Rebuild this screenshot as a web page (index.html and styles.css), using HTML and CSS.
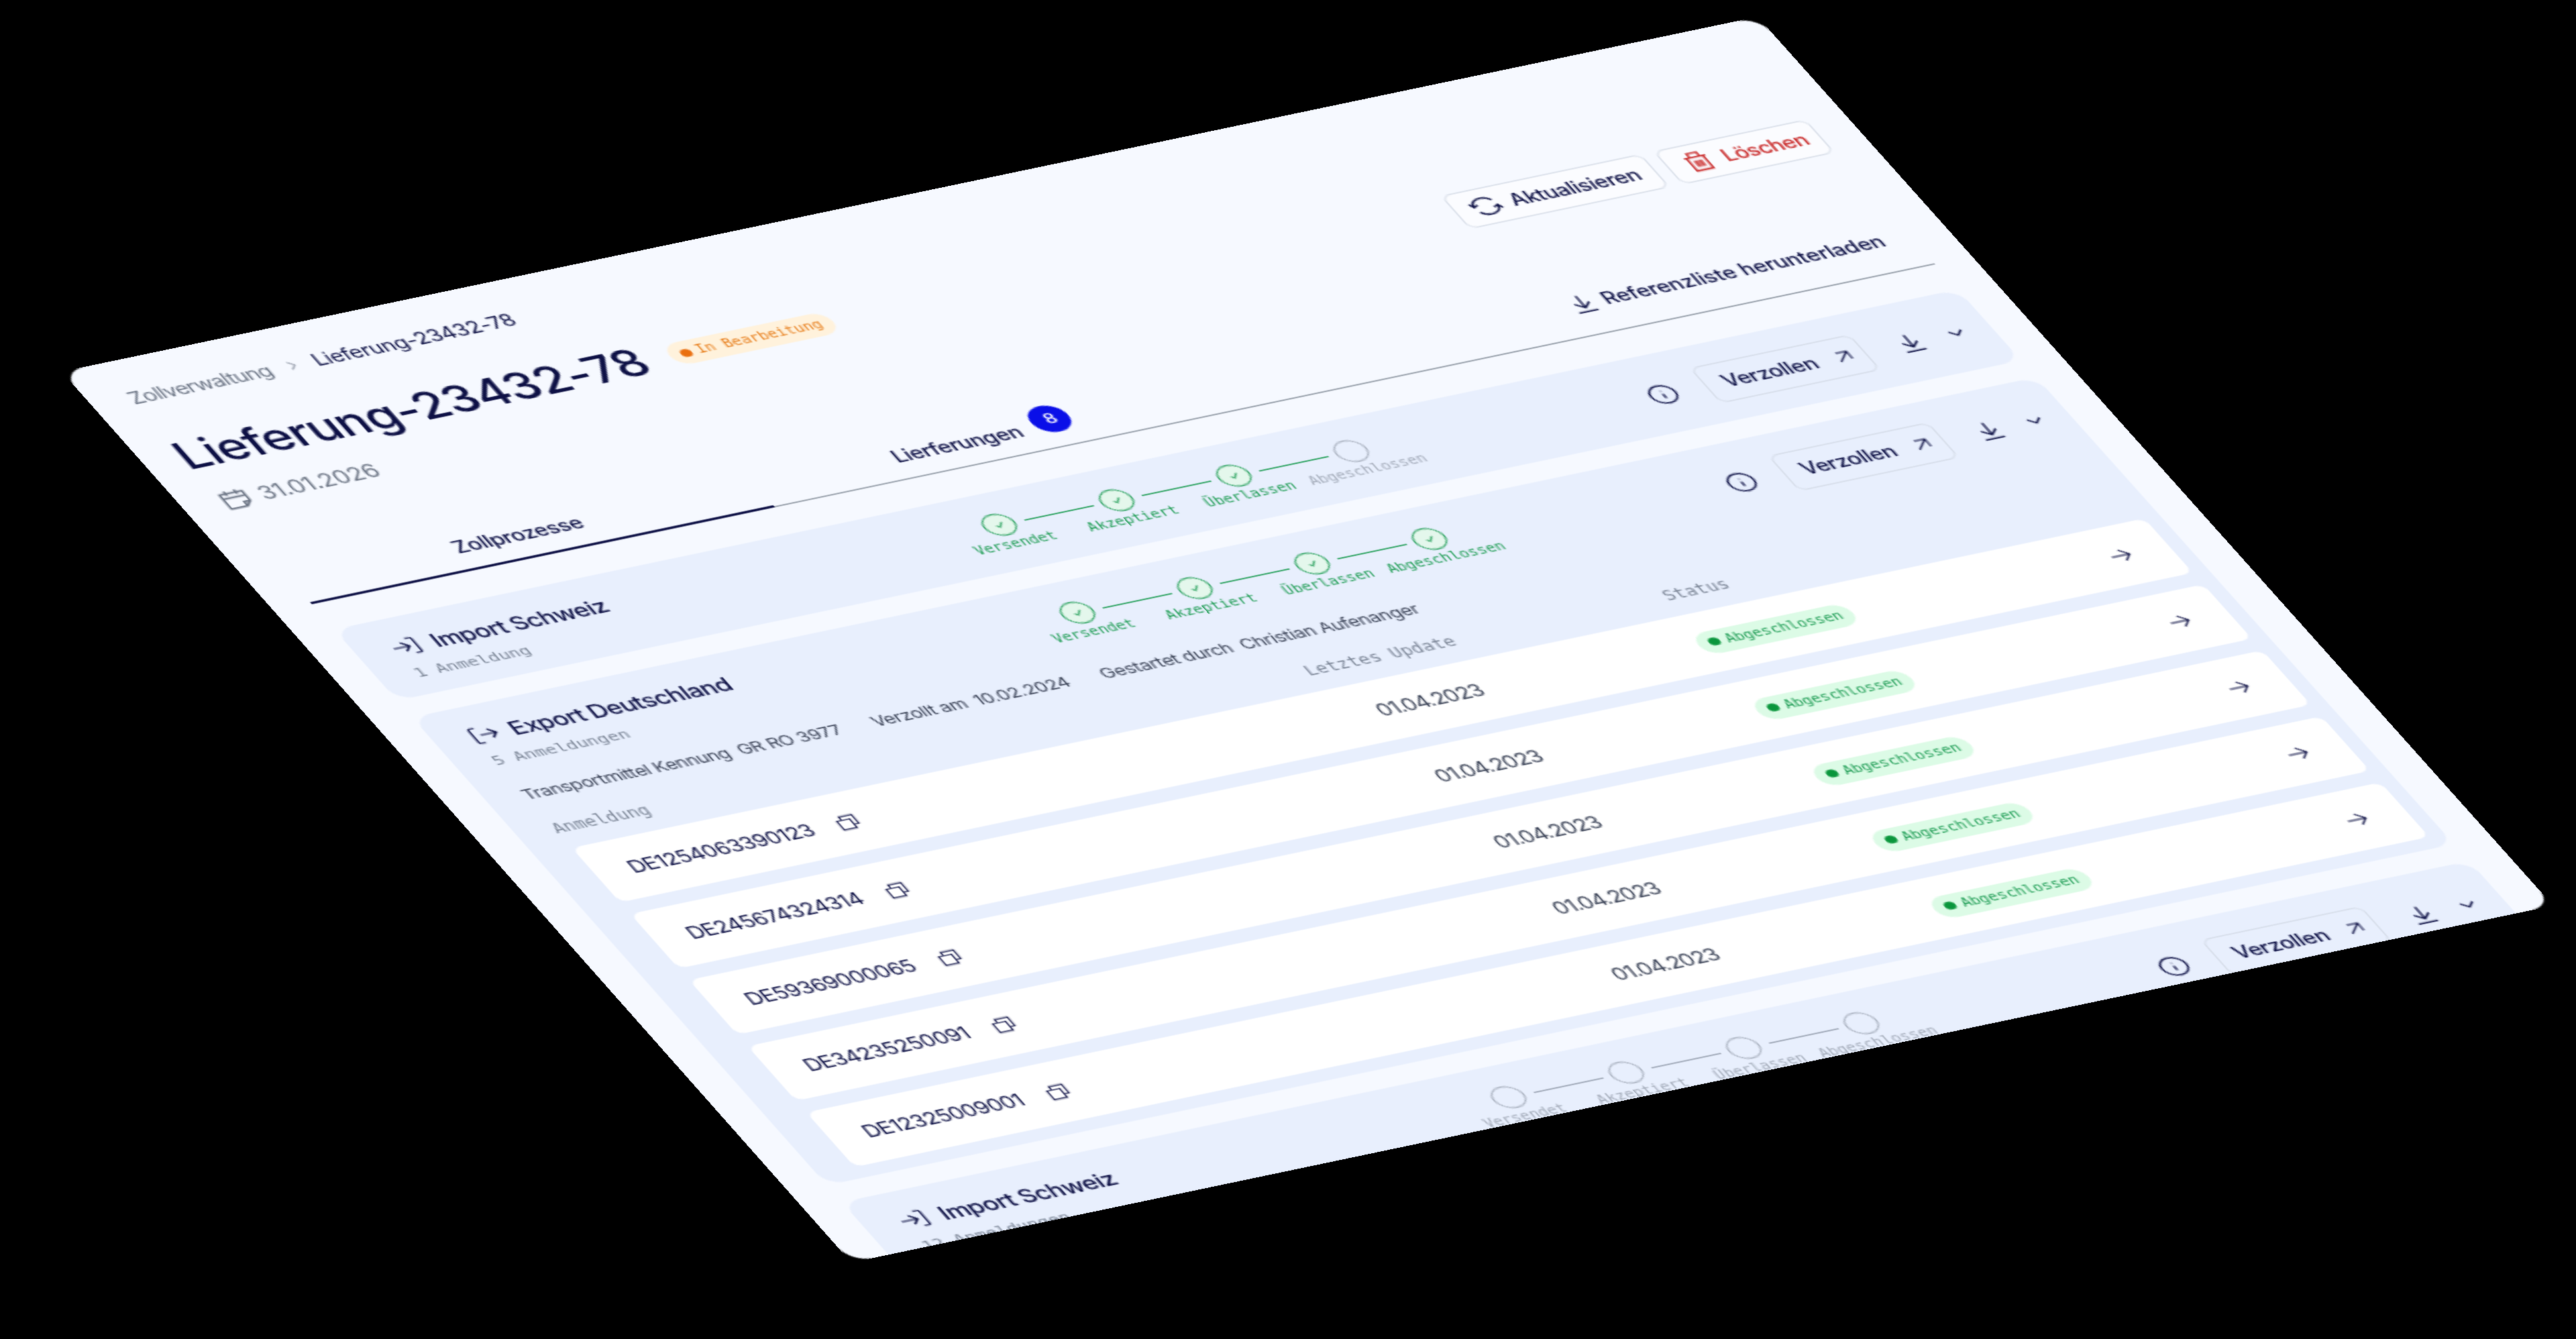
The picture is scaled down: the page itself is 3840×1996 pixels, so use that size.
FILE: index.html
```html
<!DOCTYPE html>
<html lang="de">
<head>
  <meta charset="UTF-8" />
  <meta name="viewport" content="width=device-width, initial-scale=1.0"/>
  <title>Lieferung-23432-78</title>
  <link rel="stylesheet" href="styles.css">
</head>
<body>
  <svg class="sprite" width="0" height="0">
    <symbol id="i-calendar" viewBox="0 0 16 16"><path d="M2.5 3.5h11v7l-3 3h-8z M10.5 13.5v-3h3 M2.5 6.5h11 M5.5 1.8v3 M10.5 1.8v3"/></symbol>
    <symbol id="i-refresh" viewBox="0 0 16 16"><path d="M2.2 7.2A6 6 0 0 1 13 4.6 M13.8 8.8A6 6 0 0 1 3 11.4 M1 4.8l1.2 2.6 2.6-1.2 M15 11.2l-1.2-2.6-2.6 1.2"/></symbol>
    <symbol id="i-trash" viewBox="0 0 16 16"><path d="M2.5 4.5h11 M3.8 4.5v9.5h8.4v-9.5 M5.5 4.5v-3h5v3 M6.5 7v4.5 M9.5 7v4.5 M8 7v4.5"/></symbol>
    <symbol id="i-download" viewBox="0 0 16 16"><path d="M8 1.5v10 M3.8 7.5L8 11.5l4.2-4 M2.5 14.5h11"/></symbol>
    <symbol id="i-info" viewBox="0 0 16 16"><circle cx="8" cy="8" r="7"/><path d="M8 7.5v3.5 M8 5v.6"/></symbol>
    <symbol id="i-out" viewBox="0 0 16 16"><path d="M4.5 3.5h8v8 M12.5 3.5l-9 9"/></symbol>
    <symbol id="i-chevron" viewBox="0 0 12 12"><path d="M2 4l4 4 4-4"/></symbol>
    <symbol id="i-import" viewBox="0 0 16 16"><path d="M1 8h9 M6.5 4.5L10 8l-3.5 3.5 M10.5 2h2.5a1 1 0 0 1 1 1v10a1 1 0 0 1-1 1h-2.5"/></symbol>
    <symbol id="i-export" viewBox="0 0 16 16"><path d="M5.5 2H3a1 1 0 0 0-1 1v10a1 1 0 0 0 1 1h2.5 M6 8h9 M11.5 4.5L15 8l-3.5 3.5"/></symbol>
    <symbol id="i-copy" viewBox="0 0 16 16"><path d="M1.5 5h9.5v9.5H1.5z M5 5V1.5h9.5V11H11"/></symbol>
    <symbol id="i-arrow" viewBox="0 0 16 16"><path d="M1.5 8h13 M9 2.5L14.5 8 9 13.5"/></symbol>
    <symbol id="i-check" viewBox="0 0 16 16"><path d="M5 8.5l2.2 2.2L11.2 5.5"/></symbol>
  </svg>

  <main class="panel">
    <header class="head">
      <div>
        <nav class="crumbs">
          <span class="crumb-root">Zollverwaltung</span>
          <svg class="icon crumb-sep"><use href="#i-chevron"/></svg>
          <span>Lieferung-23432-78</span>
        </nav>
        <div class="title-row">
          <h1>Lieferung-23432-78</h1>
          <span class="pill pill-orange"><i class="dot"></i>In Bearbeitung</span>
        </div>
        <div class="date"><svg class="icon"><use href="#i-calendar"/></svg>31.01.2026</div>
      </div>
      <div class="actions">
        <button class="btn btn-refresh"><svg class="icon"><use href="#i-refresh"/></svg>Aktualisieren</button>
        <button class="btn btn-red"><svg class="icon"><use href="#i-trash"/></svg>Löschen</button>
      </div>
    </header>

    <div class="tabs">
      <div class="tab tab-active">Zollprozesse</div>
      <div class="tab">Lierferungen <span class="count">8</span></div>
      <a class="ref-link"><svg class="icon"><use href="#i-download"/></svg>Referenzliste herunterladen</a>
    </div>

    <div class="cards">
      <section class="card">
        <div class="card-head">
          <div class="card-title">
            <h2><svg class="icon"><use href="#i-import"/></svg>Import Schweiz</h2>
            <p>1 Anmeldung</p>
          </div>
          <ol class="steps">
            <li class="done"><span class="ring"><svg class="icon"><use href="#i-check"/></svg></span>Versendet</li>
            <li class="done"><span class="ring"><svg class="icon"><use href="#i-check"/></svg></span>Akzeptiert</li>
            <li class="done"><span class="ring"><svg class="icon"><use href="#i-check"/></svg></span>Überlassen</li>
            <li><span class="ring"></span>Abgeschlossen</li>
          </ol>
          <div class="card-tools">
            <svg class="icon tool-info"><use href="#i-info"/></svg>
            <button class="btn btn-clear">Verzollen<svg class="icon"><use href="#i-out"/></svg></button>
            <svg class="icon tool-down"><use href="#i-download"/></svg>
            <svg class="icon tool-chev"><use href="#i-chevron"/></svg>
          </div>
        </div>
      </section>

      <section class="card card-open">
        <div class="card-head">
          <div class="card-title">
            <h2><svg class="icon"><use href="#i-export"/></svg>Export Deutschland</h2>
            <p>5 Anmeldungen</p>
          </div>
          <ol class="steps">
            <li class="done"><span class="ring"><svg class="icon"><use href="#i-check"/></svg></span>Versendet</li>
            <li class="done"><span class="ring"><svg class="icon"><use href="#i-check"/></svg></span>Akzeptiert</li>
            <li class="done"><span class="ring"><svg class="icon"><use href="#i-check"/></svg></span>Überlassen</li>
            <li class="done"><span class="ring"><svg class="icon"><use href="#i-check"/></svg></span>Abgeschlossen</li>
          </ol>
          <div class="card-tools">
            <svg class="icon tool-info"><use href="#i-info"/></svg>
            <button class="btn btn-clear">Verzollen<svg class="icon"><use href="#i-out"/></svg></button>
            <svg class="icon tool-down"><use href="#i-download"/></svg>
            <svg class="icon tool-chev"><use href="#i-chevron"/></svg>
          </div>
        </div>

        <dl class="meta">
          <div><dt>Transportmittel Kennung</dt><dd>GR RO 3977</dd></div>
          <div><dt>Verzollt am</dt><dd>10.02.2024</dd></div>
          <div><dt>Gestartet durch</dt><dd>Christian Aufenanger</dd></div>
        </dl>

        <div class="table-head">
          <span>Anmeldung</span>
          <span>Letztes Update</span>
          <span>Status</span>
        </div>

        <div class="rows">
          <div class="row">
            <div class="row-id">DE1254063390123<svg class="icon"><use href="#i-copy"/></svg></div>
            <div class="row-date">01.04.2023</div>
            <div><span class="pill pill-green"><i class="dot"></i>Abgeschlossen</span></div>
            <svg class="icon row-go"><use href="#i-arrow"/></svg>
          </div>
          <div class="row">
            <div class="row-id">DE245674324314<svg class="icon"><use href="#i-copy"/></svg></div>
            <div class="row-date">01.04.2023</div>
            <div><span class="pill pill-green"><i class="dot"></i>Abgeschlossen</span></div>
            <svg class="icon row-go"><use href="#i-arrow"/></svg>
          </div>
          <div class="row">
            <div class="row-id">DE59369000065<svg class="icon"><use href="#i-copy"/></svg></div>
            <div class="row-date">01.04.2023</div>
            <div><span class="pill pill-green"><i class="dot"></i>Abgeschlossen</span></div>
            <svg class="icon row-go"><use href="#i-arrow"/></svg>
          </div>
          <div class="row">
            <div class="row-id">DE34235250091<svg class="icon"><use href="#i-copy"/></svg></div>
            <div class="row-date">01.04.2023</div>
            <div><span class="pill pill-green"><i class="dot"></i>Abgeschlossen</span></div>
            <svg class="icon row-go"><use href="#i-arrow"/></svg>
          </div>
          <div class="row">
            <div class="row-id">DE12325009001<svg class="icon"><use href="#i-copy"/></svg></div>
            <div class="row-date">01.04.2023</div>
            <div><span class="pill pill-green"><i class="dot"></i>Abgeschlossen</span></div>
            <svg class="icon row-go"><use href="#i-arrow"/></svg>
          </div>
        </div>
      </section>

      <section class="card">
        <div class="card-head">
          <div class="card-title">
            <h2><svg class="icon"><use href="#i-import"/></svg>Import Schweiz</h2>
            <p>12 Anmeldungen</p>
          </div>
          <ol class="steps">
            <li><span class="ring"></span>Versendet</li>
            <li><span class="ring"></span>Akzeptiert</li>
            <li><span class="ring"></span>Überlassen</li>
            <li><span class="ring"></span>Abgeschlossen</li>
          </ol>
          <div class="card-tools">
            <svg class="icon tool-info"><use href="#i-info"/></svg>
            <button class="btn btn-clear">Verzollen<svg class="icon"><use href="#i-out"/></svg></button>
            <svg class="icon tool-down"><use href="#i-download"/></svg>
            <svg class="icon tool-chev"><use href="#i-chevron"/></svg>
          </div>
        </div>
      </section>
    </div>
  </main>
</body>
</html>
```

FILE: styles.css
```css
* {
  margin: 0;
  padding: 0;
  box-sizing: border-box;
}

html, body {
  height: 100%;
  overflow: hidden;
}

body {
  background-color: #000;
  color: #0d1045;
  font-family: Inter, "Noto Sans", sans-serif;
  font-size: 14px;
  line-height: 20px;
  letter-spacing: -0.02em;
}

.sprite {
  display: block;
}

.icon {
  display: block;
  flex: none;
  width: 16px;
  height: 16px;
  fill: none;
  stroke: currentColor;
  stroke-width: 1.1;
}

/* the whole page lies tilted on the black ground */
.panel {
  width: 1100px;
  height: 850px;
  padding: 24px 24px 0;
  overflow: hidden;
  border-radius: 14px;
  background-color: #f6f9ff;
  transform-origin: 0 0;
  transform: matrix3d(2.29986, -0.48089, 0, 0.00000064, 1.37892, 1.55376, 0, -0.00000456, 0, 0, 1, 0, 92, 554, 0, 1);
}

.head {
  display: flex;
  justify-content: space-between;
  height: 119px;
}

.crumbs {
  display: flex;
  align-items: center;
  gap: 9px;
}

.crumb-root {
  letter-spacing: -0.035em;
  color: #6b7484;
}

.crumb-sep {
  width: 10px;
  height: 10px;
  color: #8d95a3;
  transform: rotate(-90deg);
}

.title-row {
  display: flex;
  align-items: center;
  gap: 16px;
  margin-top: 26px;
}

h1 {
  margin-left: -2px;
  font-size: 32px;
  line-height: 40px;
  font-weight: 450;
  letter-spacing: -0.018em;
}

.pill {
  display: inline-flex;
  align-items: center;
  gap: 4px;
  height: 20px;
  padding: 0 7px;
  border-radius: 10px;
  font-family: "DejaVu Sans Mono", monospace;
  font-size: 9.6px;
  letter-spacing: 0;
}

.dot {
  width: 7px;
  height: 7px;
  border-radius: 50%;
  background-color: currentColor;
}

.pill-orange {
  background-color: #fff2dc;
  color: #e8801f;
}

.pill-orange .dot {
  background-color: #ea6f0f;
}

.pill-green {
  background-color: #dcfbe6;
  color: #1f9d55;
}

.pill-green .dot {
  background-color: #0a963c;
}

.date {
  display: flex;
  align-items: center;
  gap: 5px;
  margin-top: 12px;
  margin-left: -1px;
  font-size: 15.5px;
  color: #6b7484;
}

.date .icon {
  width: 21px;
  height: 21px;
}

.actions {
  display: flex;
  gap: 8px;
  padding-top: 67px;
}

.btn {
  display: flex;
  align-items: center;
  gap: 6px;
  height: 32px;
  padding: 0 9px;
  border: 1px solid #d9dfe9;
  border-radius: 6px;
  background-color: #fbfcff;
  color: inherit;
  font: inherit;
  font-weight: 450;
  letter-spacing: inherit;
}

.btn > .icon {
  width: 20px;
  height: 20px;
}

.btn-refresh {
  width: 130px;
}

.btn-red {
  width: 99px;
  color: #c92a2a;
  letter-spacing: -0.03em;
}

.tabs {
  display: flex;
  align-items: flex-start;
  height: 87px;
  border-bottom: 1px solid #8f98a3;
}

.tab {
  display: flex;
  align-items: center;
  justify-content: center;
  gap: 8px;
  width: 300px;
  height: 87px;
  padding: 47px 8px 0 0;
  font-weight: 450;
}

.tab-active {
  border-bottom: 2px solid #0d1045;
  font-weight: 500;
}

.count {
  display: grid;
  place-items: center;
  width: 24px;
  height: 24px;
  margin: -10px -2px 0 2px;
  border-radius: 50%;
  background-color: #0a0fe8;
  color: #fff;
  font-size: 12px;
}

.ref-link {
  display: flex;
  align-items: center;
  gap: 5px;
  margin-left: auto;
  margin-top: 49px;
  padding-right: 17px;
  font-weight: 450;
  letter-spacing: -0.01em;
}

.ref-link .icon {
  width: 18px;
  height: 18px;
}

.cards {
  display: flex;
  flex-direction: column;
  gap: 16px;
  margin-top: 24px;
}

.card {
  flex: none;
  padding: 0 16px 10px 20px;
  border-radius: 12px;
  background-color: #e8effd;
}

.card-open {
  padding-right: 10px;
}

.card-open .card-head {
  margin-right: 6px;
}

.card-head {
  display: flex;
  align-items: flex-start;
  padding-top: 16px;
}

.card-title {
  width: 356px;
}

h2 {
  display: flex;
  align-items: center;
  gap: 8px;
  padding-left: 2px;
  font-size: 16px;
  font-weight: 500;
  letter-spacing: -0.03em;
}

h2 .icon {
  width: 18px;
  height: 18px;
}

.card-title p {
  margin-top: 6px;
  padding-left: 3px;
  font-family: "DejaVu Sans Mono", monospace;
  font-size: 11.2px;
  line-height: 16px;
  letter-spacing: 0;
  color: #7d8798;
}

.steps {
  display: flex;
  margin-top: 2px;
  list-style: none;
  font-family: "DejaVu Sans Mono", monospace;
  font-size: 9.6px;
  line-height: 12px;
  letter-spacing: 0;
  color: #a3abb9;
}

.steps li {
  position: relative;
  display: flex;
  flex-direction: column;
  align-items: center;
  gap: 2px;
  width: 76px;
}

.steps li:not(:last-child)::after {
  content: "";
  position: absolute;
  top: 10px;
  left: 54px;
  width: 45px;
  height: 1px;
  background-color: #9aa3b2;
}

.steps .done {
  color: #1f9d55;
}

.steps .done:not(:last-child)::after {
  background-color: #1f9d55;
}

.ring {
  display: grid;
  place-items: center;
  width: 20px;
  height: 20px;
  border: 1px solid currentColor;
  border-radius: 50%;
}

.done .ring {
  background-color: #e4f7ec;
}

.ring .icon {
  width: 12px;
  height: 12px;
}

.card-tools {
  display: flex;
  align-items: center;
  margin-left: auto;
  margin-top: 2px;
}

.tool-info,
.tool-down {
  width: 18px;
  height: 18px;
}

.btn-clear {
  height: 34px;
  width: 104px;
  justify-content: space-between;
  padding: 0 6px 0 11px;
  background-color: transparent;
  border-color: #d6dde9;
  margin: 0 20px 0 18px;
}

.btn-clear > .icon {
  width: 14px;
  height: 14px;
}

.tool-chev {
  width: 12px;
  height: 12px;
  margin-left: 15px;
}

.meta {
  display: flex;
  gap: 21px;
  margin-top: 16px;
  padding-left: 3px;
  font-size: 12px;
  line-height: 16px;
  color: #3c4458;
}

.meta div {
  display: flex;
  gap: 6px;
}

.table-head {
  display: grid;
  grid-template-columns: 487px 232px 1fr;
  margin-top: 16px;
  padding-left: 3px;
  font-family: "DejaVu Sans Mono", monospace;
  font-size: 11.4px;
  line-height: 16px;
  letter-spacing: 0;
  color: #7d8798;
}

.rows {
  display: flex;
  flex-direction: column;
  gap: 11px;
  margin: 10px 0 0 4px;
}

.row {
  display: grid;
  grid-template-columns: 483px 208px 1fr 14px;
  align-items: center;
  height: 52px;
  padding: 0 24px 0 22px;
  border-radius: 6px;
  background-color: #fff;
}

.row-id {
  display: flex;
  align-items: center;
  gap: 16px;
  letter-spacing: -0.035em;
}

.row-id .icon {
  width: 14px;
  height: 14px;
}

.row-date {
  padding-left: 1px;
  letter-spacing: -0.05em;
  color: #3c4458;
}

.row-go {
  width: 14px;
  height: 14px;
  stroke-width: 1.2;
}
```
